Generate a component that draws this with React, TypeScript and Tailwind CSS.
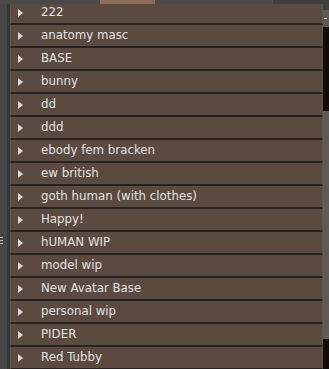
const items = [
  "222",
  "anatomy masc",
  "BASE",
  "bunny",
  "dd",
  "ddd",
  "ebody fem bracken",
  "ew british",
  "goth human (with clothes)",
  "Happy!",
  "hUMAN WIP",
  "model wip",
  "New Avatar Base",
  "personal wip",
  "PIDER",
  "Red Tubby",
];

function Caret() {
  return (
    <svg width="5" height="8" viewBox="0 0 5 8" className="shrink-0">
      <path d="M0 0 L5 4 L0 8 Z" fill="#d8d8d8" />
    </svg>
  );
}

export default function App() {
  return (
    <div
      className="relative h-[369px] w-[329px] overflow-hidden bg-[#3b3b3b]"
      style={{ fontFamily: '"DejaVu Sans", sans-serif' }}
    >
      {/* top strip */}
      <div className="flex h-[4px]">
        <div className="w-[100px] bg-[#4a4a4a]" />
        <div className="w-[55px] bg-[#8e6c5a]" />
        <div className="w-[118px] bg-[#4b4b4d]" />
        <div className="flex-1 bg-[#3e3e3e]" />
      </div>

      <div className="flex">
        {/* left gutter */}
        <div className="relative w-[10px] shrink-0 self-stretch">
          <div className="flex h-full">
            <div className="w-[7px] bg-[#474747]" />
            <div className="w-[3px] bg-[#383838]" />
          </div>
          <div className="absolute left-0 top-[233px] flex flex-col gap-[2px]">
            <div className="h-px w-[3px] bg-[#bdbdbd]" />
            <div className="h-px w-[3px] bg-[#bdbdbd]" />
            <div className="h-px w-[3px] bg-[#bdbdbd]" />
          </div>
        </div>

        {/* list */}
        <div className="flex w-[313px] flex-col">
          {items.map((name, i) => (
            <div
              key={name}
              className={
                "flex items-center border-b-2 border-b-[#262321] border-x border-x-[#65544a] bg-[#5b4a3f] pl-[7px] text-[11.8px] text-[#e2e2e2] " +
                (i === 0 ? "h-[21px] pb-[2px]" : "h-[23px] pt-px")
              }
            >
              <Caret />
              <span className="ml-[18px] leading-none">{name}</span>
            </div>
          ))}
        </div>

        {/* scrollbar */}
        <div className="flex w-[6px] shrink-0 flex-col bg-[#111111]">
          <div className="h-[6px] bg-[#3e3e3e]" />
          <div className="relative h-[17px] bg-[#5a5a5a]">
            <div className="absolute left-[1px] top-[8px] h-px w-[3px] bg-[#cfcfcf]" />
          </div>
          <div className="h-[84px] bg-[#0d0d0d]" />
          <div className="h-[228px] bg-[#5c5c5c]" />
          <div className="flex-1 bg-[#0d0d0d]" />
        </div>
      </div>
    </div>
  );
}
